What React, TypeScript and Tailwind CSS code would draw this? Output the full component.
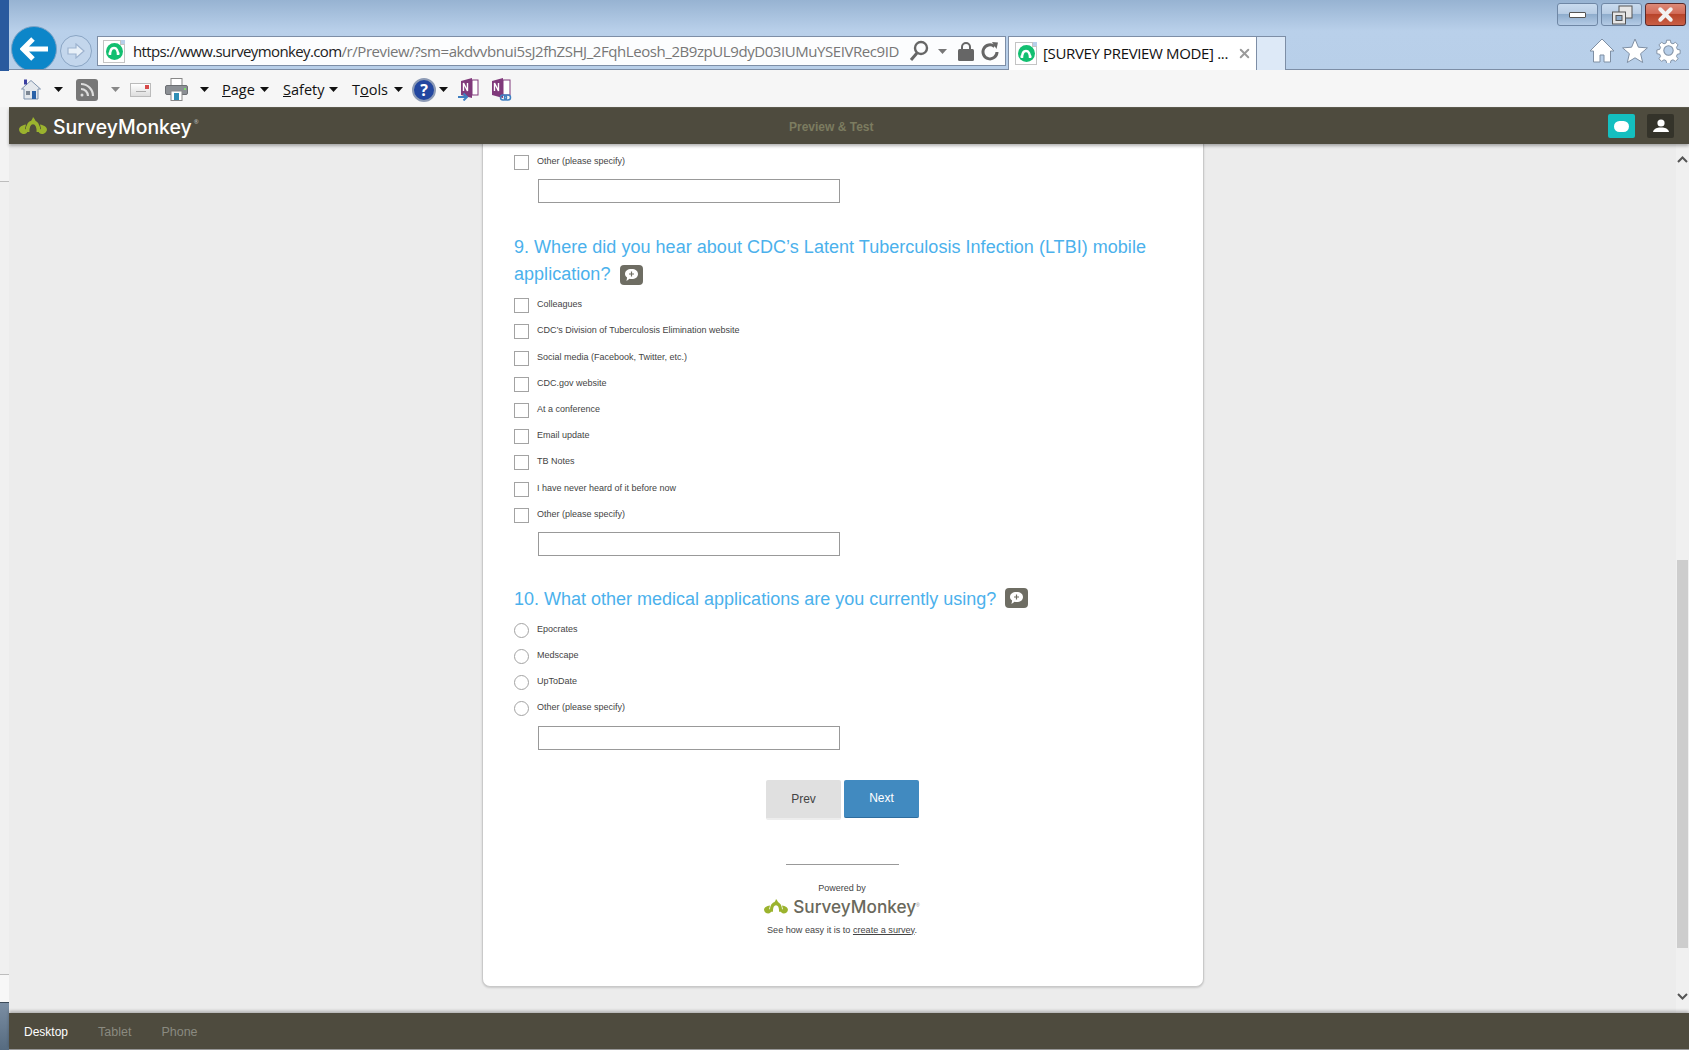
import React from 'react';
import { X } from 'lucide-react';

const arial = "font-['Liberation_Sans',Arial,sans-serif]";
const segoe = "font-['Open_Sans','Noto_Sans',sans-serif]";

const Caret = ({ color = '#111', className = '' }: { color?: string; className?: string }) => (
  <svg width="9" height="5" viewBox="0 0 9 5" className={className}>
    <path d="M0 0h9L4.500 5z" fill={color} />
  </svg>
);

// monkey mark: tuft, arched head, two ears
const MonkeyMark = ({ w = 28 }: { w?: number }) => (
  <svg width={w} height={w * 0.64} viewBox="0 0 28 18" fill="none">
    <path d="M8.500 15C8.500 8 10.500 5.500 14 5.500S19.500 8 19.500 15" stroke="#9bb32e" strokeWidth="3.800" />
    <path d="M11.500 4.500C12.500 3.500 13.500 2 14 0 15.500 1.500 16.500 3.500 17 5z" fill="#9bb32e" />
    <path d="M7 7.500C3 8 0 10 0 12.500S2.500 17 5 17C7 17 8 16 8.500 14.500L6 11.500z" fill="#9bb32e" />
    <path d="M21 7.500C25 8 28 10 28 12.500S25.500 17 23 17C21 17 20 16 19.500 14.500L22 11.500z" fill="#9bb32e" />
  </svg>
);

const Favicon = () => (
  <div className="relative w-[22px] h-[23px] bg-white border border-[#c4c4c4] flex items-center justify-center shrink-0">
    <div className="absolute -right-px -top-px w-[5px] h-[5px] bg-[#b8cfe9] border-b border-l border-[#c4c4c4]" />
    <div className="w-[17px] h-[17px] rounded-full bg-[#12bf70] flex items-center justify-center">
      <svg width="12" height="10" viewBox="0 0 12 10" fill="none" stroke="#fff" strokeWidth="2.400">
        <path d="M2 9C2 4.500 3.500 2 6 2s4 2.500 4 7" />
        <path d="M0.500 7.500h2M9.500 7.500h2" strokeWidth="2" />
      </svg>
    </div>
  </div>
);

const CommentIcon = () => (
  <div className="w-[23px] h-[20px] rounded-[4px] bg-[#6e6d63] inline-flex items-center justify-center shrink-0">
    <svg width="15" height="14" viewBox="0 0 15 14">
      <path d="M7.500 1C11.500 1 14 3 14 6s-2.500 5-6.500 5c-.7 0-1.300 0-1.900-.2L2.500 13l.6-3.500C1.800 8.600 1 7.400 1 6c0-3 2.500-5 6.500-5z" fill="#fff" />
      <path d="M7.500 3.500v5M5 6h5" stroke="#6e6d63" strokeWidth="1.200" />
    </svg>
  </div>
);

const WinButton = ({ red, children }: { red?: boolean; children: React.ReactNode }) => (
  <div
    className={
      'relative w-[41px] h-[23px] rounded-[3px] border flex items-center justify-center ' +
      (red
        ? 'border-[#5a2a2a] bg-[linear-gradient(#dc8a78_0%,#d26b58_45%,#b8442a_50%,#c95f45_100%)]'
        : 'border-[#6f87a5] bg-[linear-gradient(#c9dbef_0%,#b9cde4_45%,#8fadcd_50%,#b4cbe5_100%)]')
    }
  >
    {children}
  </div>
);

const Choice = ({ label, radio }: { label: string; radio?: boolean }) => (
  <div className="flex h-[26.2px] items-start">
    <div className={'w-[15px] h-[15px] bg-white border border-[#a3a3a3] mt-[3px] shrink-0 ' + (radio ? 'rounded-full' : '')} />
    <span className={`ml-2 mt-[2px] text-[9px] leading-[15px] text-[#444] ${arial}`}>{label}</span>
  </div>
);

const OtherInput = () => <div className="mt-[1px] ml-6 w-[302px] h-[24px] border border-[#999] bg-white" />;

const Heading = ({ children }: { children: React.ReactNode }) => (
  <h2 className={`text-[18px] leading-[27px] text-[#4bb1ec] font-normal ${arial}`}>{children}</h2>
);

const q9 = [
  'Colleagues',
  'CDC’s Division of Tuberculosis Elimination website',
  'Social media (Facebook, Twitter, etc.)',
  'CDC.gov website',
  'At a conference',
  'Email update',
  'TB Notes',
  'I have never heard of it before now',
  'Other (please specify)',
];
const q10 = ['Epocrates', 'Medscape', 'UpToDate', 'Other (please specify)'];

const BrowserBar = () => (
  <div className="relative h-[70px] shrink-0 border-b border-[#7d8ea6] bg-[linear-gradient(#97b3d2_0%,#b9d0ea_45%,#b8cfe9_100%)]">
    <div className="flex h-[69px] items-end">
      <div className="w-[9px] h-[71px] self-start bg-[#2a5a9e] shrink-0 z-10" />
      {/* back / forward */}
      <div className="ml-[2px] w-[46px] h-[43px] overflow-hidden shrink-0">
        <div className="w-[46px] h-[46px] rounded-full bg-[#0c86c9] border border-[#7ea3c6] flex items-center justify-center">
          <svg width="28" height="26" viewBox="0 0 28 26" fill="none" stroke="#fff" strokeWidth="5">
            <path d="M13 3L3 13l10 10M4 13h24" />
          </svg>
        </div>
      </div>
      <div className="ml-[3px] mb-[2px] w-[32px] h-[32px] rounded-full border border-[#8aa5c4] bg-[#c3d6ec] flex items-center justify-center shrink-0">
        <svg width="18" height="16" viewBox="0 0 18 16" fill="#e8f0f8" stroke="#9db3cf" strokeWidth="1.200">
          <path d="M9 1l8 7-8 7v-4H1V5h8z" />
        </svg>
      </div>
      {/* address box */}
      <div className="ml-[5px] mb-[3px] w-[909px] h-[30px] bg-white/95 border border-[#7d8ea6] flex items-center pl-[5px] shrink-0">
        <Favicon />
        <div className={`ml-2 pt-[1px] w-[767px] text-[15px] tracking-[-0.430px] whitespace-nowrap overflow-hidden text-[#777] ${segoe}`}>
          <span className="text-[#222] tracking-[-0.620px]">https://www.surveymonkey.com</span>/r/Preview/?sm=akdvvbnui5sJ2fhZSHJ_2FqhLeosh_2B9zpUL9dyD03IUMuYSEIVRec9ID
        </div>
        <svg width="20" height="22" viewBox="0 0 20 22" fill="none" stroke="#666" className="ml-[9px] shrink-0">
          <circle cx="12" cy="8" r="6" strokeWidth="2.400" />
          <path d="M8 13L2 20" strokeWidth="3" />
        </svg>
        <Caret color="#777" className="ml-[9px] shrink-0" />
        <svg width="16" height="20" viewBox="0 0 16 20" className="ml-[11px] shrink-0">
          <path d="M4 9V6a4 4 0 0 1 8 0v3" fill="none" stroke="#666" strokeWidth="2" />
          <rect y="8" width="16" height="12" rx="1.500" fill="#666" />
        </svg>
        <svg width="18" height="20" viewBox="0 0 18 20" fill="none" stroke="#666" strokeWidth="3" className="ml-[7px] shrink-0">
          <path d="M13.500 5.500A7 7 0 1 0 16 11" />
          <path d="M11 1l6 .5L15.500 8z" fill="#666" stroke="none" />
        </svg>
      </div>
      {/* tab */}
      <div className="ml-[2px] w-[249px] h-[34px] -mb-px bg-white border border-[#7d8ea6] border-b-0 flex items-center pl-[6px] shrink-0 z-10">
        <Favicon />
        <span className={`ml-[6px] w-[188px] text-[15px] tracking-[-0.350px] whitespace-nowrap text-[#111] ${segoe}`}>[SURVEY PREVIEW MODE] ...</span>
        <X size={15} strokeWidth={3.200} className="ml-[6px] text-[#9a9a9a]" />
      </div>
      <div className="w-[29px] h-[34px] -mb-px bg-[#dde9f7] border border-l-0 border-b-0 border-[#7d8ea6] shrink-0" />
    </div>

    {/* window controls */}
    <div className="absolute right-[3px] top-[3px] flex gap-[3px]">
      <WinButton>
        <div className="w-[17px] h-[6px] bg-white border border-[#555] rounded-[1px]" />
      </WinButton>
      <WinButton>
        <svg width="22" height="20" viewBox="0 0 22 20">
          <rect x="8" y="1" width="13" height="12" fill="#e6e6e6" stroke="#555" />
          <rect x="1.500" y="7" width="13" height="12" fill="#e6e6e6" stroke="#555" />
          <rect x="5" y="10.500" width="6" height="5" fill="#8fadcd" stroke="#555" />
        </svg>
      </WinButton>
      <WinButton red>
        <X size={21} strokeWidth={4.500} className="text-[#f2f2f2]" />
      </WinButton>
    </div>

    {/* home, favourites, tools */}
    <div className="absolute left-[1589px] top-[38px] flex items-center gap-[7px]">
      <svg width="26" height="25" viewBox="0 0 26 25">
        <path d="M13 1L1 13h3.500v11h6.500v-7h4v7h6.500V13H25z" fill="#fff" stroke="#7f8fa3" />
      </svg>
      <svg width="26" height="25" viewBox="0 0 26 25">
        <path d="M13 1l3.400 8.200 9 .7-6.800 5.800 2.100 8.800L13 19.800l-7.700 4.700 2.100-8.800L.6 9.900l9-.7z" fill="#fff" stroke="#7f8fa3" />
      </svg>
      <svg width="25" height="25" viewBox="0 0 24 24" className="ml-[1px]">
        <path
          d="M10 1h4l.6 3 2.200.9 2.600-1.700 2.800 2.800-1.700 2.600.9 2.200 3 .6v4l-3 .6-.9 2.200 1.700 2.600-2.800 2.800-2.600-1.700-2.200.9-.6 3h-4l-.6-3-2.200-.9-2.600 1.700-2.800-2.800 1.700-2.600-.9-2.200-3-.6v-4l3-.6.9-2.200-1.700-2.600 2.800-2.800 2.600 1.700 2.200-.9z"
          fill="#fff"
          stroke="#7f8fa3"
          transform="translate(1.200 1.200) scale(.9)"
        />
        <circle cx="12" cy="12" r="4.500" fill="#b8cfe9" stroke="#7f8fa3" />
      </svg>
    </div>
  </div>
);

const OneNote = () => (
  <div className="ml-[10px] shrink-0">
    <svg width="21" height="23" viewBox="0 0 21 23">
      <path d="M3 3l11-3v20L3 17z" fill="#80397b" />
      <rect x="14" y="2" width="6" height="15" fill="#fff" stroke="#80397b" />
      <path d="M5.500 13V5l4 8V5" fill="none" stroke="#fff" strokeWidth="1.400" />
      <path d="M0 19h9M5.500 15.500L9 19l-3.500 3.500" fill="none" stroke="#3f7fc0" strokeWidth="2" />
    </svg>
  </div>
);

const CommandBar = () => (
  <div className={`h-[37px] shrink-0 bg-[#f6f6f6] flex items-center pl-[21px] pt-[2px] text-[14.500px] text-[#111] ${segoe}`}>
    <svg width="20" height="21" viewBox="0 0 20 21" className="shrink-0">
      <path d="M10 1.500L0.500 10H3v10h14V10h2.500z" fill="#e4e8ec" stroke="#7f93ad" />
      <rect x="11" y="12" width="4" height="8" fill="#2a62a8" />
      <rect x="5" y="12" width="4" height="4" fill="#7d8793" />
      <rect x="3" y="0.500" width="3" height="5" fill="#3a3fa0" />
    </svg>
    <Caret className="ml-[13px] shrink-0" />
    <div className="ml-[13px] w-[22px] h-[22px] rounded-[3px] bg-[#777] flex items-center justify-center shrink-0">
      <svg width="16" height="16" viewBox="0 0 16 16" fill="none" stroke="#ddd" strokeWidth="2.200">
        <path d="M2 7a7 7 0 0 1 7 7M2 2a12 12 0 0 1 12 12" />
        <circle cx="3" cy="13" r="1.500" fill="#ddd" stroke="none" />
      </svg>
    </div>
    <Caret color="#888" className="ml-[13px] shrink-0" />
    <div className="relative ml-[10px] w-[21px] h-[14px] border border-[#bbb] bg-[linear-gradient(#fff,#ddd)] shrink-0">
      <div className="absolute right-[1px] top-[1px] w-[4px] h-[4px] bg-[#d84a4a]" />
      <div className="absolute left-[5px] top-[7px] w-[10px] h-[1px] bg-[#aaa]" />
    </div>
    <svg width="23" height="23" viewBox="0 0 23 23" className="ml-[14px] shrink-0">
      <rect x="6" y="0.500" width="11" height="8" fill="#fff" stroke="#888" />
      <rect x="0.500" y="7.500" width="22" height="9" rx="1.500" fill="#8b8f94" stroke="#6c6f73" />
      <rect x="6" y="13" width="11" height="9.500" fill="#fff" stroke="#888" />
      <rect x="9" y="15" width="5" height="7" fill="#2f8fb5" />
      <rect x="19" y="10" width="2" height="2" fill="#7fdc6a" />
    </svg>
    <Caret className="ml-[12px] shrink-0" />
    <span className="ml-[13px] w-[38px] shrink-0"><u>P</u>age</span>
    <Caret className="shrink-0" />
    <span className="ml-[14px] w-[46px] shrink-0"><u>S</u>afety</span>
    <Caret className="shrink-0" />
    <span className="ml-[14px] w-[42px] shrink-0">T<u>o</u>ols</span>
    <Caret className="shrink-0" />
    <div className="ml-[9px] w-[24px] h-[24px] rounded-full bg-[#2347a0] border-2 border-[#8d9bb5] flex items-center justify-center text-white font-bold text-[16px] leading-none shrink-0">?</div>
    <Caret className="ml-[3px] shrink-0" />
    <OneNote />
    <div className="ml-[12px] shrink-0">
      <svg width="21" height="23" viewBox="0 0 21 23">
        <path d="M1 3l11-3v20L1 17z" fill="#80397b" />
        <rect x="12" y="2" width="7" height="15" fill="#fff" stroke="#80397b" />
        <path d="M3.500 13V5l4 8V5" fill="none" stroke="#fff" strokeWidth="1.400" />
        <rect x="9.500" y="17" width="6" height="5" rx="2.500" fill="none" stroke="#3f7fc0" strokeWidth="1.500" />
        <rect x="13.500" y="17" width="6" height="5" rx="2.500" fill="none" stroke="#3f7fc0" strokeWidth="1.500" />
      </svg>
    </div>
  </div>
);

const Card = () => (
  <div className="w-[722px] h-[844px] -mt-px ml-[473px] shrink-0 bg-white border border-t-0 border-[#c9c9c9] rounded-b-[8px] shadow-[0_1px_2px_rgba(0,0,0,0.15)] pl-[31px]">
    <div className="pt-[9px]">
      <Choice label="Other (please specify)" />
      <OtherInput />
    </div>
    <div className="mt-[31px] w-[640px]">
      <Heading>
        <span className="tracking-[0.030px]">9. Where did you hear about CDC’s Latent Tuberculosis Infection (LTBI) mobile application?</span>
        <span className="inline-block align-[-2px] ml-[10px]"><CommentIcon /></span>
      </Heading>
    </div>
    <div className="mt-[5px]">
      {q9.map((o) => <Choice key={o} label={o} />)}
      <OtherInput />
    </div>
    <div className="mt-[30px] flex items-center">
      <Heading>10. What other medical applications are you currently using?</Heading>
      <span className="ml-[9px]"><CommentIcon /></span>
    </div>
    <div className="mt-[7px]">
      {q10.map((o) => <Choice key={o} label={o} radio />)}
      <OtherInput />
    </div>
    <div className={`mt-[30px] ml-[252px] flex gap-[3px] text-[12px] ${arial}`}>
      <div className="w-[75px] h-[40px] rounded-[2px] bg-[#e0e0e0] border-b-2 border-[#ededed] flex items-center justify-center text-[#444]">Prev</div>
      <div className="w-[75px] h-[38px] rounded-[2px] bg-[#418ac0] border-b border-[#2f6d9e] flex items-center justify-center text-white">Next</div>
    </div>
    <div className="mt-[44px] ml-[272px] w-[113px] h-px bg-[#999]" />
    <div className={`ml-[220px] w-[216px] flex flex-col items-center text-[#444] ${arial}`}>
      <p className="mt-[18px] text-[9px] leading-[11px]">Powered by</p>
      <div className="mt-[2px] flex items-center">
        <MonkeyMark w={24} />
        <span className="ml-[5px] text-[#6a695c] text-[17.200px] leading-[22px] font-medium font-['Inter',sans-serif]">SurveyMonkey</span>
        <span className="text-[5px] self-start mt-[6px] text-[#888]">®</span>
      </div>
      <p className="mt-[7px] text-[9.100px] leading-[11px]">See how easy it is to <u>create a survey</u>.</p>
    </div>
  </div>
);

export default function App() {
  return (
    <div className="w-[1689px] h-[1050px] overflow-hidden flex flex-col bg-[#ececec]">
      <BrowserBar />
      <CommandBar />
      <div className="flex flex-1 min-h-0">
        {/* sliver of the window behind */}
        <div className="w-[9px] shrink-0 flex flex-col bg-[#f3f3f3]">
          <div className="h-[75px] border-b border-[#bdbdbd]" />
          <div className="h-[793px] bg-[#f0f0f0] border-b border-[#bdbdbd]" />
          <div className="flex-1 bg-[#f7f7f7]" />
          <div className="h-[48px] bg-[linear-gradient(#7b8ea3,#566b80)] border-t border-[#3c4a58]" />
        </div>
        <div className="flex-1 min-w-0 flex flex-col">
          <div className="relative z-10 h-[37px] shrink-0 bg-[#4e4b3e] border-t border-[#5c5a4d] shadow-[0_2px_3px_rgba(0,0,0,0.3)] flex items-center pl-[10px] pr-[6px]">
            <MonkeyMark w={28} />
            <span className="ml-[6px] mt-[3px] text-white text-[19.400px] leading-none font-medium font-['Inter',sans-serif]">SurveyMonkey</span>
            <span className="ml-[2px] text-[6px] self-start mt-[10px] text-[#bbb]">®</span>
            <span className={`absolute left-[780px] top-[10px] text-[12px] font-bold text-[#7c7c60] ${arial}`}>Preview &amp; Test</span>
            <div className="ml-auto flex gap-[12px] pr-[9px]">
              <div className="w-[27px] h-[24px] rounded-[2px] bg-[#14bfc0] flex items-center justify-center">
                <div className="w-[15px] h-[11px] rounded-full bg-white" />
              </div>
              <div className="w-[27px] h-[24px] rounded-[2px] bg-[#34332a] flex items-center justify-center">
                <svg width="16" height="14" viewBox="0 0 16 14" fill="#fff">
                  <circle cx="8" cy="4" r="3.600" />
                  <path d="M0 13c.5-3 3.500-4 6-4.500h4c2.500.5 5.500 1.500 6 4.500z" />
                </svg>
              </div>
            </div>
          </div>
          <div className="flex-1 min-h-0 flex overflow-hidden">
            <div className="flex-1 min-w-0 flex flex-col overflow-hidden">
              <Card />
            </div>
            {/* scrollbar */}
            <div className="relative w-[13px] shrink-0 bg-[#f0f0f0] flex flex-col items-center">
              <svg width="11" height="7" viewBox="0 0 11 7" fill="none" stroke="#555" strokeWidth="2" className="mt-[12px] shrink-0">
                <path d="M1 6l4.500-4.500L10 6" />
              </svg>
              <div className="mt-[397px] w-[11px] h-[388px] bg-[#cdcdcd] shrink-0" />
              <svg width="11" height="7" viewBox="0 0 11 7" fill="none" stroke="#555" strokeWidth="2" className="mt-[45px] shrink-0">
                <path d="M1 1l4.500 4.500L10 1" />
              </svg>
            </div>
          </div>
          <div className={`relative z-10 h-[36px] shrink-0 bg-[#4e4b3e] shadow-[0_-2px_3px_rgba(0,0,0,0.25)] flex items-center pl-[15px] pt-[2px] text-[12.500px] text-[#8a8a80] ${arial}`}>
            <span className="text-white text-[12px]">Desktop</span>
            <span className="ml-[30px]">Tablet</span>
            <span className="ml-[30px]">Phone</span>
          </div>
          <div className="h-px shrink-0 bg-[#999]" />
        </div>
      </div>
    </div>
  );
}
